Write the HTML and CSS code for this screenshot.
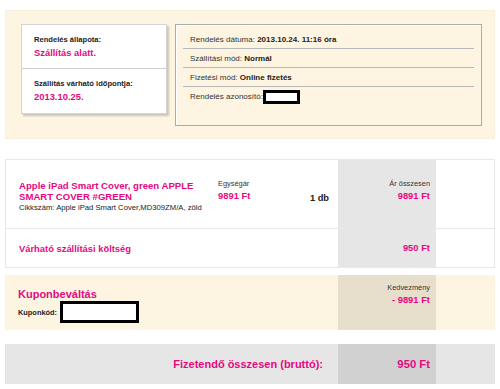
FILE: index.html
```html
<!DOCTYPE html>
<html>
<head>
    <meta charset="UTF-8">
    <title>Rendelés részletei</title>
    <link rel="stylesheet" href="styles.css">
</head>
<body>
    <div class="order-info">
        <div class="status-card">
            <div class="status-block">
                <div class="status-label">Rendelés állapota:</div>
                <div class="status-value">Szállítás alatt.</div>
            </div>
            <div class="status-block">
                <div class="status-label">Szállítás várható időpontja:</div>
                <div class="status-value">2013.10.25.</div>
            </div>
        </div>
        <div class="details">
            <div class="detail-row">Rendelés dátuma:&nbsp;<b>2013.10.24. 11:16 óra</b></div>
            <div class="detail-row">Szállítási mód:&nbsp;<b>Normál</b></div>
            <div class="detail-row">Fizetési mód:&nbsp;<b>Online fizetés</b></div>
            <div class="detail-row">Rendelés azonosító:<span class="redact redact-small"></span></div>
        </div>
    </div>

    <div class="cart">
        <div class="product-row">
            <div class="product-name">
                <div class="product-title">Apple iPad Smart Cover, green APPLE SMART COVER #GREEN</div>
                <div class="product-sku">Cikkszám: Apple iPad Smart Cover,MD309ZM/A, zöld</div>
            </div>
            <div class="unit-price">
                <div class="small-label">Egységár</div>
                <div class="price">9891 Ft</div>
            </div>
            <div class="qty">1 db</div>
            <div class="sum-col">
                <div class="small-label">Ár összesen</div>
                <div class="price">9891 Ft</div>
            </div>
            <div></div>
        </div>
        <div class="shipping-row">
            <div class="shipping-name">Várható szállítási költség</div>
            <div class="sum-col">
                <div class="price">950 Ft</div>
            </div>
            <div></div>
        </div>
    </div>

    <div class="coupon">
        <div class="coupon-left">
            <div class="coupon-title">Kuponbeváltás</div>
            <div class="coupon-code">Kuponkód:<span class="redact redact-large"></span></div>
        </div>
        <div class="sum-col coupon-sum">
            <div class="small-label">Kedvezmény</div>
            <div class="price">- 9891 Ft</div>
        </div>
        <div></div>
    </div>

    <div class="total">
        <div class="total-label">Fizetendő összesen (bruttó):</div>
        <div class="sum-col total-sum">
            <div class="price big">950 Ft</div>
        </div>
        <div></div>
    </div>
</body>
</html>
```

FILE: styles.css
```css
body {
    margin: 0;
    padding: 10px 5px;
    background: #fff;
    color: #222;
    font-family: "Liberation Sans", Arial, sans-serif;
}

/* felső rész */
.order-info {
    display: flex;
    gap: 8px;
    height: 129px;
    box-sizing: border-box;
    padding: 13px 12px 14px 15px;
    background: #fdf5e2;
    border: 1px solid #f8efdc;
}

.status-card {
    width: 146px;
    height: 90px;
    box-sizing: border-box;
    background: #fff;
    border: 1px solid #d4d4d4;
    box-shadow: 2px 2px 2px rgba(0,0,0,0.2);
}

.status-block {
    padding: 9px 12px 8px;
}

.status-block + .status-block {
    border-top: 1px solid #cfcfcf;
}

.status-label {
    font-size: 7.6px;
    font-weight: bold;
    line-height: 12px;
}

.status-value {
    font-size: 9.4px;
    font-weight: bold;
    line-height: 14px;
    color: #e5097f;
}

.details {
    flex: 1;
    height: 102px;
    box-sizing: border-box;
    padding: 5px 7px 0;
    border: 1px solid #ababab;
    box-shadow: inset 1px 1px 0 #fff;
}

.detail-row {
    display: flex;
    align-items: center;
    height: 19px;
    box-sizing: border-box;
    padding-left: 7px;
    font-size: 8px;
    color: #333;
    border-bottom: 1px solid #b9b9b9;
}

.detail-row b {
    color: #222;
}

.detail-row:last-child {
    border-bottom: none;
}

.redact {
    display: inline-block;
    box-sizing: border-box;
    background: #fff;
    border: 3px solid #000;
}

.redact-small {
    width: 37px;
    height: 14px;
}

.redact-large {
    width: 79px;
    height: 22px;
    margin-left: 3px;
}

/* kosár */
.cart {
    margin-top: 20px;
    border: 1px solid #e8e8e8;
}

.product-row {
    display: grid;
    grid-template-columns: 212px 60px 1fr 98px 58px;
    height: 68px;
    border-bottom: 1px solid #e8e8e8;
}

.product-name {
    padding: 20px 9px 0 13px;
}

.product-title {
    font-size: 9.6px;
    font-weight: bold;
    line-height: 11px;
    color: #e5097f;
}

.product-sku {
    font-size: 7.7px;
    line-height: 11px;
    color: #222;
}

.unit-price {
    padding-top: 19px;
}

.small-label {
    font-size: 7.4px;
    line-height: 10px;
    color: #333;
}

.price {
    font-size: 9.4px;
    font-weight: bold;
    line-height: 14px;
    color: #e5097f;
}

.price.big {
    font-size: 11.3px;
}

.qty {
    padding: 31px 9px 0 0;
    text-align: right;
    font-size: 9.3px;
    font-weight: bold;
    line-height: 14px;
}

.sum-col {
    background: #e6e6e6;
    text-align: right;
    padding: 19px 6px 0 0;
}

.shipping-row {
    display: grid;
    grid-template-columns: 1fr 98px 58px;
    height: 38px;
}

.shipping-name {
    display: flex;
    align-items: center;
    padding-left: 13px;
    font-size: 9.4px;
    font-weight: bold;
    color: #e5097f;
}

.shipping-row .sum-col {
    display: flex;
    align-items: center;
    justify-content: flex-end;
    padding-top: 0;
}

/* kupon */
.coupon {
    display: grid;
    grid-template-columns: 1fr 98px 58px;
    height: 55px;
    margin-top: 7px;
    background: #fdf5e2;
    border: 1px solid #fbf2de;
    border-width: 0 1px;
}

.coupon-left {
    padding: 13px 0 0 12px;
}

.coupon-title {
    font-size: 11px;
    font-weight: bold;
    line-height: 13px;
    color: #e5097f;
}

.coupon-code {
    display: flex;
    align-items: center;
    font-size: 7.4px;
    font-weight: bold;
}

.coupon-sum {
    background: #e7dfcb;
    padding-top: 8px;
}

/* összesen */
.total {
    display: grid;
    grid-template-columns: 1fr 98px 58px;
    height: 40px;
    margin-top: 14px;
    background: #e6e6e6;
    border: 1px solid #e3e3e3;
    border-width: 0 1px;
}

.total-label {
    display: flex;
    align-items: center;
    justify-content: flex-end;
    padding-right: 15px;
    font-size: 11px;
    font-weight: bold;
    color: #e5097f;
}

.total-sum {
    display: flex;
    align-items: center;
    justify-content: flex-end;
    background: #d1d1d1;
    padding-top: 0;
}
```
